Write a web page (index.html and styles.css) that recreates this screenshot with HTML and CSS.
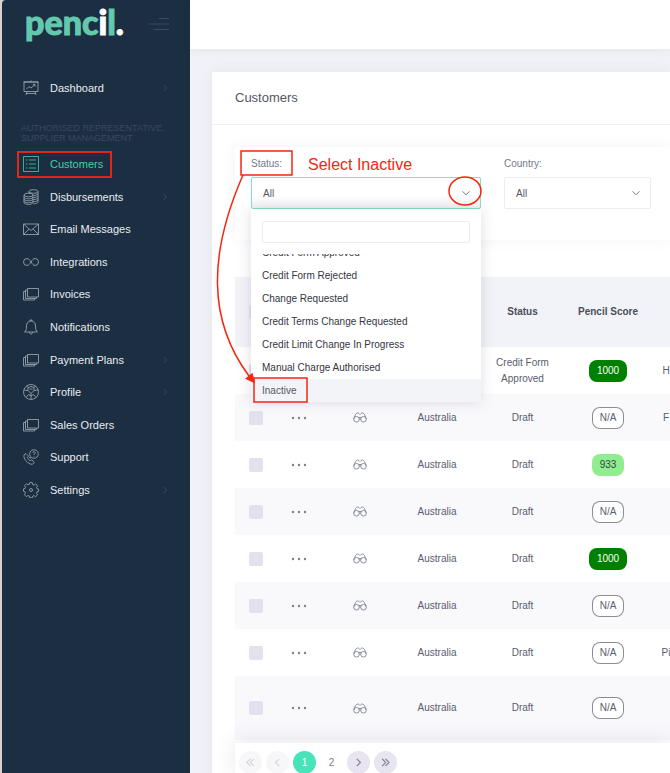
FILE: index.html
```html
<!DOCTYPE html>
<html lang="en">
<head>
  <meta charset="UTF-8">
  <meta name="viewport" content="width=device-width, initial-scale=1.0">
  <title>Customers - Pencil</title>
  <link rel="stylesheet" href="styles.css">
</head>
<body>
  <!-- icon set -->
  <svg class="sprite" aria-hidden="true">
    <symbol id="i-board" viewBox="0 0 16 16"><path d="M1 2h14v9.500H1zM8 .5V2M.5 2h15M4 11.500L3 15M12 11.500l1 3.500M3.500 13.500h9M3.500 9l2.500-2.500 2 1.500L12 4.500M9.800 4.300H12v2.200"/></symbol>
    <symbol id="i-list" viewBox="0 0 16 16"><path d="M.5 .5h15v15H.5zM3 4h1.500M3 8h1.500M3 12h1.500M6 4h7M6 8h7M6 12h7"/></symbol>
    <symbol id="i-coins" viewBox="0 0 16 16"><ellipse cx="10.500" cy="2.500" rx="4.500" ry="1.800"/><path d="M6 2.500v2M15 2.500v10.500c0 1-2 1.800-4.500 1.800M15 4.600c0 1-2 1.800-4.500 1.800M15 6.700c0 1-2 1.800-4.500 1.800M15 8.800c0 1-2 1.800-4.500 1.800M15 10.900c0 1-2 1.800-4.500 1.800"/><ellipse cx="5.500" cy="6" rx="4.500" ry="1.800"/><path d="M1 6v7.500c0 1 2 1.900 4.500 1.900s4.500-.9 4.500-1.900V6M1 8c0 1 2 1.800 4.500 1.800S10 9 10 8M1 10c0 1 2 1.800 4.500 1.800S10 11 10 10M1 12c0 1 2 1.800 4.500 1.800S10 13 10 12"/></symbol>
    <symbol id="i-mail" viewBox="0 0 16 16"><path d="M.5 3h15v10.500H.5zM.5 3L8 9.500 15.500 3M.5 13.500L6 8M15.500 13.500L10 8"/></symbol>
    <symbol id="i-loop" viewBox="0 0 16 16"><path d="M8 8C6.500 5.700 5.400 4.500 4 4.500a3.500 3.500 0 000 7c3.300 0 4.700-7 8-7a3.500 3.500 0 010 7c-1.400 0-2.500-1.200-4-3.500z"/></symbol>
    <symbol id="i-stack" viewBox="0 0 16 16"><path d="M4.500 2.500h11v8.500h-11zM4.500 4h-2v8.500h11V11M2.500 5.500h-2V14h11v-1.500"/></symbol>
    <symbol id="i-bell" viewBox="0 0 16 16"><path d="M1.500 13c1.500-1.200 2-2.500 2-6 0-3 1.800-5 4.500-5s4.500 2 4.500 5c0 3.500.5 4.800 2 6zM7 2V1h2v1M6.300 13c0 2.600 3.400 2.600 3.400 0"/></symbol>
    <symbol id="i-profile" viewBox="0 0 16 16"><circle cx="8" cy="8" r="7.500"/><path d="M5 3.500l3-1 3 1v3L8 9.500 5 6.500zM8 9.500V15M5 6.500L1 6M11 6.500l4-.5M3 13.500l2.500-3L8 12l2.500-1.500 2.500 3M5 3.500L3.500 2.200M11 3.500l1.500-1.300M6.500 5h3"/></symbol>
    <symbol id="i-support" viewBox="0 0 16 16"><path d="M11 .7a4.300 4.300 0 11-2.500 7.800L6.700 9l.6-1.700A4.300 4.300 0 0111 .7M9.800 3.900c0-1.700 2.500-1.600 2.400 0 0 .9-1.200 1-1.200 2M11 7v.6M3 4.500L1 6c-1 3.500 4 9.500 8.300 9.300l2-1.800-2.500-2.800-1.800 1c-1.300-.8-2.300-2-2.700-3.300l1.200-1.300z"/></symbol>
    <symbol id="i-gear" viewBox="0 0 16 16"><circle cx="8" cy="8" r="1.500"/><path d="M6.700 .6h2.600l.4 1.900 1.400.6 1.600-1.100 1.900 1.900-1.100 1.600.6 1.300 1.600.4v2.200l-1.600.4-.6 1.400 1.100 1.600-1.900 1.900-1.600-1.100-1.400.6-.4 1.600H6.700l-.4-1.700-1.400-.6-1.600 1.100-1.900-1.900 1.100-1.600-.5-1.300L.5 9.300V6.900L2 6.500l.6-1.300-1.100-1.600 1.900-1.900L5 2.900l1.400-.6z"/></symbol>
    <symbol id="i-glasses" viewBox="0 0 16 12"><circle cx="4" cy="8" r="3.200"/><circle cx="12" cy="8" r="3.200"/><path d="M7.200 8c.4-.6 1.200-.6 1.600 0M6.500 6l3 0M.8 7.500L3 2.500C3.800 .8 6 .3 7 1.500l1 1 1-1c1-1.200 3.200-.7 4 1l2.200 5"/></symbol>
    <symbol id="i-dots" viewBox="0 0 16 4"><circle cx="2" cy="2" r="1.200"/><circle cx="8" cy="2" r="1.200"/><circle cx="14" cy="2" r="1.200"/></symbol>
    <symbol id="i-right" viewBox="0 0 8 8"><path d="M2.500 .8L5.700 4 2.500 7.200"/></symbol>
    <symbol id="i-left" viewBox="0 0 8 8"><path d="M5.500 .8L2.300 4l3.200 3.200"/></symbol>
    <symbol id="i-first" viewBox="0 0 8 8"><path d="M4 .8L.8 4 4 7.200M7 .8L3.800 4 7 7.200"/></symbol>
    <symbol id="i-last" viewBox="0 0 8 8"><path d="M1 .8L4.200 4 1 7.200M4 .8L7.200 4 4 7.200"/></symbol>
    <symbol id="i-down" viewBox="0 0 8 8"><path d="M.5 2.300L4 5.800l3.500-3.500"/></symbol>
  </svg>

  <aside class="sidebar">
    <div class="brand">
      <a class="logo" href="#">penc<span>i</span>l<span>.</span></a>
      <button class="toggle" aria-label="Toggle menu">
        <svg viewBox="0 0 20 12"><path d="M10 .5h10M0 6h20M5 11.500h15"/></svg>
      </button>
    </div>
    <nav>
      <ul class="menu top" id="menuTop"></ul>
      <h2>Authorised Representative, Supplier Management</h2>
      <ul class="menu" id="menu"></ul>
    </nav>
  </aside>

  <div class="page">
    <header class="topbar"></header>
    <main>
      <section class="card">
        <h1>Customers</h1>
        <div class="card-body">
          <div class="filters">
            <div class="field open">
              <label for="status">Status:</label>
              <div class="select">
                <select id="status"><option>All</option></select>
                <svg class="icon arrow"><use href="#i-down"/></svg>
              </div>
              <div class="dropdown">
                <input type="text" aria-label="Search status">
                <ul role="listbox" aria-label="Status">
                  <li role="option">Credit Form Approved</li>
                  <li role="option">Credit Form Rejected</li>
                  <li role="option">Change Requested</li>
                  <li role="option">Credit Terms Change Requested</li>
                  <li role="option">Credit Limit Change In Progress</li>
                  <li role="option">Manual Charge Authorised</li>
                  <li role="option" class="active">Inactive</li>
                </ul>
              </div>
              <!-- guide notes -->
              <span class="note">Select Inactive</span>
              <svg class="guide" viewBox="0 0 290 270" aria-hidden="true">
                <rect x="31" y="11" width="51" height="24"/>
                <ellipse cx="255" cy="51" rx="16" ry="14"/>
                <rect x="44" y="238" width="53" height="24"/>
                <path d="M33 35C-2 115 -2 181 39 236"/>
                <path class="tip" d="M44 242l-7.500-3.500 5.500-4.500z"/>
              </svg>
            </div>
            <div class="field">
              <label for="country">Country:</label>
              <div class="select">
                <select id="country"><option>All</option></select>
                <svg class="icon arrow"><use href="#i-down"/></svg>
              </div>
            </div>
          </div>

          <table>
            <colgroup>
              <col class="c-check"><col class="c-more"><col class="c-view"><col class="c-country"><col class="c-status"><col class="c-score"><col class="c-name">
            </colgroup>
            <thead>
              <tr>
                <th><input type="checkbox" aria-label="Select all"></th>
                <th></th>
                <th></th>
                <th>Country</th>
                <th>Status</th>
                <th>Pencil Score</th>
                <th></th>
              </tr>
            </thead>
            <tbody id="rows"></tbody>
          </table>

          <div class="pager">
            <button disabled aria-label="First"><svg class="icon"><use href="#i-first"/></svg></button>
            <button disabled aria-label="Previous"><svg class="icon"><use href="#i-left"/></svg></button>
            <button class="current">1</button>
            <button class="plain">2</button>
            <button aria-label="Next"><svg class="icon"><use href="#i-right"/></svg></button>
            <button aria-label="Last"><svg class="icon"><use href="#i-last"/></svg></button>
          </div>
        </div>
      </section>
    </main>
  </div>

  <script>
    // name, icon, has submenu
    const menuTop = [["Dashboard", "board", true]];
    const menu = [
      ["Customers", "list", false],
      ["Disbursements", "coins", true],
      ["Email Messages", "mail", false],
      ["Integrations", "loop", false],
      ["Invoices", "stack", false],
      ["Notifications", "bell", false],
      ["Payment Plans", "stack", true],
      ["Profile", "profile", true],
      ["Sales Orders", "stack", false],
      ["Support", "support", false],
      ["Settings", "gear", true]
    ];

    function renderMenu(id, items) {
      document.getElementById(id).innerHTML = items.map(([name, icon, sub]) => `
        <li class="${name === "Customers" ? "active" : ""}"><a href="#">
          <svg class="icon"><use href="#i-${icon}"/></svg>
          <span>${name}</span>
          ${sub ? '<svg class="icon more"><use href="#i-right"/></svg>' : ""}
        </a></li>`).join("");
    }

    // status, score, badge style, name
    const rows = [
      ["Credit Form Approved", "1000", "high", "H"],
      ["Draft", "N/A", "none", "F"],
      ["Draft", "933", "good", ""],
      ["Draft", "N/A", "none", ""],
      ["Draft", "1000", "high", ""],
      ["Draft", "N/A", "none", ""],
      ["Draft", "N/A", "none", "Pi"],
      ["Draft", "N/A", "none", ""]
    ];

    document.getElementById("rows").innerHTML = rows.map(([status, score, style, name]) => `
      <tr>
        <td><input type="checkbox" aria-label="Select row"></td>
        <td><button class="row-btn" aria-label="Actions"><svg class="dots"><use href="#i-dots"/></svg></button></td>
        <td><button class="row-btn" aria-label="View"><svg class="icon glasses"><use href="#i-glasses"/></svg></button></td>
        <td>Australia</td>
        <td>${status}</td>
        <td><span class="badge ${style}">${score}</span></td>
        <td>${name}</td>
      </tr>`).join("");

    renderMenu("menuTop", menuTop);
    renderMenu("menu", menu);
  </script>
</body>
</html>
```
FILE: styles.css
```css
* {margin: 0; padding: 0; box-sizing: border-box;}
body {
  font-family: "Liberation Sans", Arial, sans-serif;
  font-size: 10px;
  color: #595d6e;
  background: #d9d2cf;
  height: 100vh;
  padding-left: 2px;
  display: flex;
  overflow: hidden;
}
ul {list-style: none;}
button, input, select {
  font: inherit;
  color: inherit;
  border: none;
  background: none;
}
button {cursor: pointer;}
.sprite {
  position: absolute;
  width: 0;
  height: 0;
}
.icon {
  fill: none;
  stroke: currentColor;
  flex: none;
}

/* sidebar */
.sidebar {
  flex: none;
  width: 188px;
  background: #1b2e42;
  border-top-left-radius: 4px;
}
.brand {
  display: flex;
  justify-content: space-between;
  align-items: center;
  height: 48px;
  padding: 0 21px 0 23px;
}
.logo {
  margin-bottom: 4px;
  font-family: Lato, sans-serif;
  font-size: 34px;
  font-weight: 900;
  line-height: 40px;
  color: #64c8ae;
  text-decoration: none;
  -webkit-text-stroke: 1px currentColor;
}
.logo span {color: #fff;}
.toggle {
  width: 20px;
  height: 12px;
}
.toggle svg {
  display: block;
  stroke: #3b4b63;
}
.menu {
  display: grid;
  grid-auto-rows: 1fr;
  height: 358px;
}
.menu.top {
  height: 32px;
  margin-top: 24px;
}
.menu a {
  display: flex;
  align-items: center;
  height: 100%;
  padding: 0 21px;
  color: #e9ecf1;
  font-size: 11px;
  text-decoration: none;
}
.menu .icon {
  width: 16px;
  height: 16px;
  margin-right: 11px;
  color: #a3aebb;
  stroke-width: .8;
}
.menu .icon.more {
  width: 8px;
  height: 8px;
  margin: 0 0 0 auto;
  color: #43516a;
}
.menu li {position: relative;}
.menu .active a, .menu .active .icon {color: #45cfa6;}
.menu .active::after {
  content: "";
  position: absolute;
  inset: 3px 78px 3px 15px;
  border: 2px solid #e0281a;
}
nav h2 {
  padding: 0 19px;
  margin: 19px 0 5px;
  font-size: 9px;
  font-weight: 400;
  line-height: 10px;
  color: #3c4763;
  text-transform: uppercase;
}

/* page */
.page {
  flex: 1;
  min-width: 0;
  background: #f1f2f7;
}
.topbar {
  height: 49px;
  background: #fff;
  box-shadow: 0 1px 8px rgba(82, 63, 105, .08);
}
main {padding: 23px 0 0 22px;}
.card {
  background: #fff;
  box-shadow: 0 0 13px rgba(82, 63, 105, .08);
}
.card h1 {
  height: 53px;
  padding-left: 23px;
  border-bottom: 1px solid #f0f1f5;
  font-size: 13px;
  font-weight: 400;
  line-height: 52px;
  color: #54575f;
}
.card-body {padding: 22px 0 0 23px;}

/* filters */
.filters {
  display: grid;
  grid-template-columns: 230fr 147fr;
  gap: 23px;
  padding: 8px 19px 31px 16px;
  margin-bottom: 37px;
  box-shadow: 0 0 14px rgba(82, 63, 105, .06);
}
.field {position: relative;}
.field label {
  display: block;
  height: 22px;
  line-height: 18px;
  color: #74788a;
}
.select {position: relative;}
.select select {
  display: block;
  appearance: none;
  width: 100%;
  height: 32px;
  padding: 0 11px;
  border: 1px solid #ebedf2;
  border-radius: 2px;
  color: #54575f;
}
.open select {
  border-color: #82e3c4;
  background: linear-gradient(#fff 60%, #f3f3f6);
}
.arrow {
  position: absolute;
  top: 12px;
  right: 11px;
  width: 8px;
  height: 8px;
  color: #74788a;
}
.dropdown {
  position: absolute;
  z-index: 2;
  top: 100%;
  left: 0;
  right: 0;
  padding-top: 12px;
  background: #fff;
  box-shadow: 0 0 13px rgba(82, 63, 105, .18);
}
.dropdown input {
  display: block;
  width: calc(100% - 22px);
  height: 22px;
  margin: 0 11px 11px;
  padding: 0 8px;
  border: 1px solid #ebedf2;
  border-radius: 2px;
}
.dropdown ul {
  display: flex;
  flex-direction: column;
  justify-content: flex-end;
  height: 148px;
  overflow: hidden;
}
.dropdown li {
  flex: none;
  height: 23px;
  padding-left: 11px;
  line-height: 23px;
  color: #33363f;
}
.dropdown .active {
  background: #f3f4f8;
  color: #54575f;
}

/* guide notes */
.note {
  position: absolute;
  top: 0;
  left: 57px;
  font-size: 16px;
  line-height: 20px;
  color: #f5260f;
}
.guide {
  position: absolute;
  z-index: 3;
  top: -15px;
  left: -41px;
  width: 290px;
  height: 270px;
  fill: none;
  stroke: #f5260f;
  stroke-width: 1.5;
  pointer-events: none;
}
.guide .tip {fill: #f5260f;}

/* table */
table {
  width: 452px;
  table-layout: fixed;
  border-collapse: collapse;
}
.c-check {width: 42px;}
.c-more {width: 43px;}
.c-view {width: 80px;}
.c-country {width: 74px;}
.c-status {width: 97px;}
.c-score {width: 74px;}
.c-name {width: 42px;}
th, td {
  height: 47px;
  text-align: center;
  vertical-align: middle;
  line-height: 16px;
}
th {
  height: 70px;
  background: #f2f3f8;
  color: #4b4e58;
}
td:nth-child(5) {padding: 0 16px;}
tbody tr:nth-child(even) {background: #f9f9fc;}
tbody tr:last-child td {height: 64px;}
input[type="checkbox"] {
  display: block;
  appearance: none;
  width: 14px;
  height: 14px;
  margin: 0 auto;
  border-radius: 2px;
  background: #e4e1ef;
}
.row-btn {
  display: block;
  margin: 0 auto;
  color: #7c8090;
}
.row-btn svg {display: block;}
.dots {
  width: 16px;
  height: 4px;
  fill: currentColor;
}
.glasses {
  width: 14px;
  height: 11px;
}
.badge {
  display: inline-block;
  height: 22px;
  padding: 0 8px;
  border-radius: 8px;
  line-height: 22px;
  vertical-align: middle;
}
.badge.high {
  background: #008000;
  color: #fff;
}
.badge.good {
  background: #90ee90;
  color: #33473f;
}
.badge.none {
  background: #fff;
  box-shadow: inset 0 0 0 1px #8b8d94;
}

/* pager */
.pager {
  position: relative;
  display: flex;
  gap: 4px;
  margin-top: 3px;
  padding: 8px 4px;
  background: #fff;
  box-shadow: 0 -4px 20px rgba(82, 63, 105, .12);
}
.pager button {
  display: flex;
  align-items: center;
  justify-content: center;
  width: 23px;
  height: 23px;
  border-radius: 50%;
  background: #e8e5f1;
  color: #7c8090;
}
.pager .icon {
  width: 9px;
  height: 9px;
}
.pager button:disabled {
  background: #f7f7fa;
  color: #d3d4dc;
}
.pager .current {
  background: #48e3b8;
  color: #fff;
}
.pager .plain {background: none;}
```
